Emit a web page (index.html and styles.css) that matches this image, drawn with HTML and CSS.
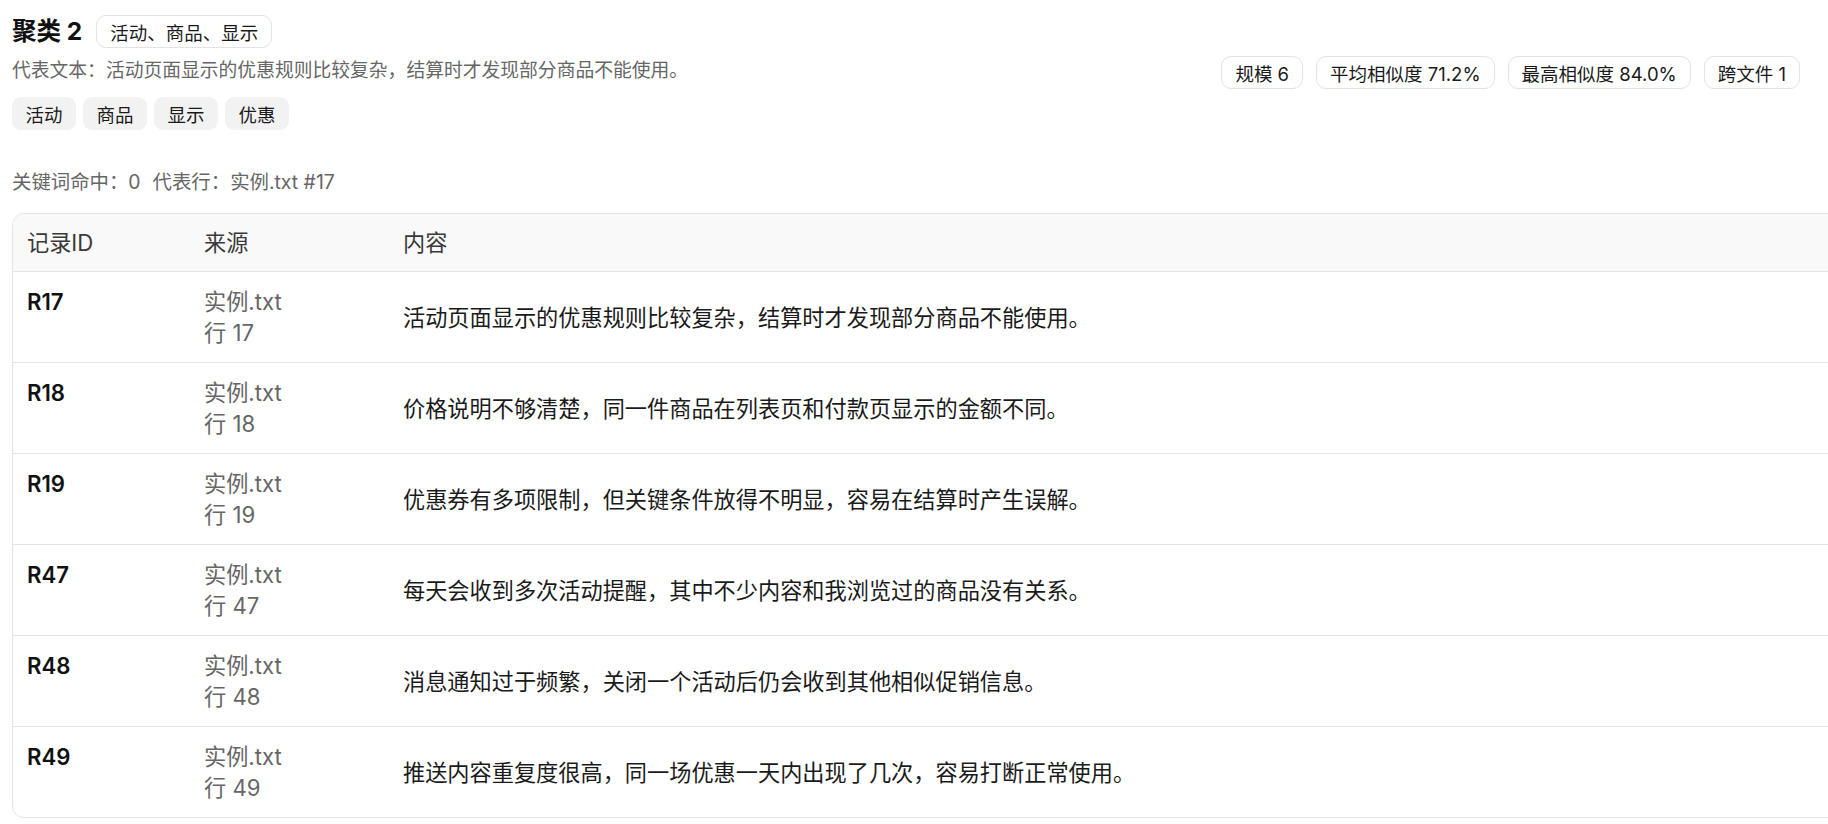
FILE: index.html
```html
<!DOCTYPE html>
<html lang="zh-CN">
<head>
	<meta charset="utf-8">
	<meta name="viewport" content="width=device-width, initial-scale=1">
	<title>聚类 2</title>
	<link rel="stylesheet" href="styles.css">
</head>
<body>
	<div class="page">
		<div class="cluster-head">
			<div class="cluster-main">
				<div class="title-row">
					<h2 class="title">聚类 2</h2>
					<span class="pill">活动、商品、显示</span>
				</div>
				<p class="summary">代表文本：活动页面显示的优惠规则比较复杂，结算时才发现部分商品不能使用。</p>
				<div class="tags">
					<span class="tag">活动</span>
					<span class="tag">商品</span>
					<span class="tag">显示</span>
					<span class="tag">优惠</span>
				</div>
			</div>
			<div class="stats">
				<span class="pill">规模 6</span>
				<span class="pill">平均相似度 71.2%</span>
				<span class="pill">最高相似度 84.0%</span>
				<span class="pill">跨文件 1</span>
			</div>
		</div>

		<p class="meta"><span>关键词命中：0</span><span>代表行：实例.txt #17</span></p>

		<div class="table-wrap">
			<table class="records">
				<colgroup>
					<col class="col-id">
					<col class="col-src">
					<col>
				</colgroup>
				<thead>
					<tr>
						<th>记录ID</th>
						<th>来源</th>
						<th>内容</th>
					</tr>
				</thead>
				<tbody>
					<tr>
						<td class="rid">R17</td>
						<td class="src">实例.txt<br>行 17</td>
						<td class="text">活动页面显示的优惠规则比较复杂，结算时才发现部分商品不能使用。</td>
					</tr>
					<tr>
						<td class="rid">R18</td>
						<td class="src">实例.txt<br>行 18</td>
						<td class="text">价格说明不够清楚，同一件商品在列表页和付款页显示的金额不同。</td>
					</tr>
					<tr>
						<td class="rid">R19</td>
						<td class="src">实例.txt<br>行 19</td>
						<td class="text">优惠券有多项限制，但关键条件放得不明显，容易在结算时产生误解。</td>
					</tr>
					<tr>
						<td class="rid">R47</td>
						<td class="src">实例.txt<br>行 47</td>
						<td class="text">每天会收到多次活动提醒，其中不少内容和我浏览过的商品没有关系。</td>
					</tr>
					<tr>
						<td class="rid">R48</td>
						<td class="src">实例.txt<br>行 48</td>
						<td class="text">消息通知过于频繁，关闭一个活动后仍会收到其他相似促销信息。</td>
					</tr>
					<tr>
						<td class="rid">R49</td>
						<td class="src">实例.txt<br>行 49</td>
						<td class="text">推送内容重复度很高，同一场优惠一天内出现了几次，容易打断正常使用。</td>
					</tr>
				</tbody>
			</table>
		</div>
	</div>
</body>
</html>
```

FILE: styles.css
```css
html, body {
	margin: 0;
	background: #fff;
}

body {
	font-family: Inter, "Noto Sans CJK SC", sans-serif;
	color: #1a1a1a;
	overflow: hidden;
}

.page {
	padding: 15px 28px 0 12px;
}

/* header: title, summary and tags on the left, stats on the right */
.cluster-head {
	display: flex;
	justify-content: space-between;
	align-items: center;
}

.title-row {
	display: flex;
	align-items: center;
	gap: 14px;
}

.title {
	margin: 0;
	font-size: 24.5px;
	font-weight: 700;
	line-height: 33px;
	color: #111;
}

.pill {
	display: inline-flex;
	align-items: center;
	height: 33px;
	box-sizing: border-box;
	padding: 0 13px;
	border: 1px solid #e3e3e3;
	border-radius: 10px;
	font-size: 18.5px;
	color: #1a1a1a;
	white-space: nowrap;
}

.summary {
	margin: 9px 0 0;
	font-size: 18.8px;
	line-height: 28px;
	color: #666;
}

.tags {
	display: flex;
	gap: 7px;
	margin-top: 12px;
}

.tag {
	display: inline-flex;
	align-items: center;
	height: 33px;
	padding: 0 13.5px;
	border-radius: 9px;
	background: #f2f2f2;
	font-size: 18.5px;
	color: #1a1a1a;
}

.stats {
	display: flex;
	gap: 13px;
}

.meta {
	display: flex;
	gap: 12px;
	margin: 40px 0 0;
	font-size: 19.4px;
	line-height: 24px;
	color: #666;
}

/* records table, wider than the viewport */
.table-wrap {
	width: 1860px;
	margin-top: 19px;
	border: 1px solid #e4e4e4;
	border-radius: 12px;
	overflow: hidden;
}

.records {
	width: 100%;
	border-collapse: collapse;
	table-layout: fixed;
}

.col-id { width: 177px; }
.col-src { width: 199px; }

.records th,
.records td {
	padding: 14px 14px;
	text-align: left;
	line-height: 31px;
	font-size: 22.2px;
}

.records th {
	padding: 13px 14px;
	background: #f9f9f9;
	font-weight: 400;
	color: #3a3a3a;
	border-bottom: 1px solid #e4e4e4;
}

.records tbody tr + tr td {
	border-top: 1px solid #e4e4e4;
}

.rid {
	vertical-align: top;
	font-weight: 600;
	color: #111;
}

.src {
	vertical-align: top;
	color: #666;
}

.text {
	vertical-align: middle;
	color: #1a1a1a;
}
```
